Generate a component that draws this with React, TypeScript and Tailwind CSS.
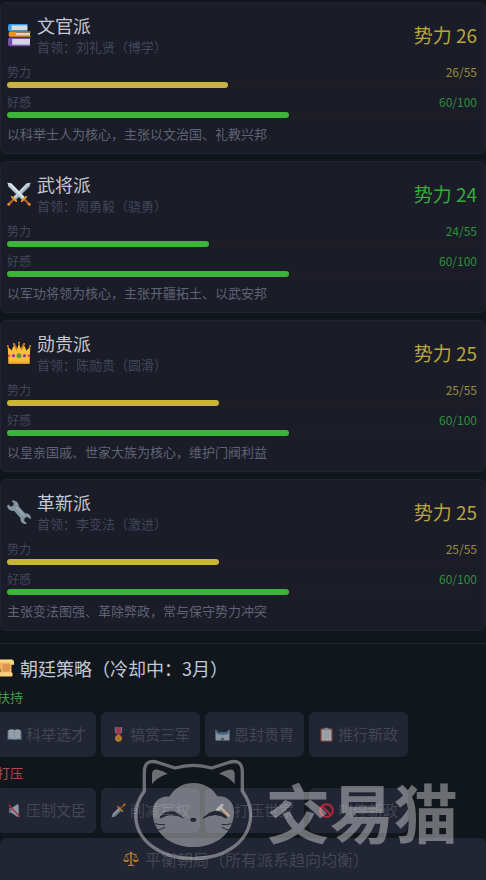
import type { ReactNode } from "react"

type Faction = {
  name: string
  leader: string
  trait: string
  power: number
  favor: number
  desc: string
  icon: ReactNode
  tone: "gold" | "green"
}

const MAX_POWER = 55
const MAX_FAVOR = 100

const TONES = {
  gold: { title: "text-[#b9a63c]", value: "text-[#9c8b38]", bar: "bg-[#c8b43e]" },
  green: { title: "text-[#38a93c]", value: "text-[#2f8f3a]", bar: "bg-[#3cb43a]" },
}

// ─── Faction icons ────────────────────────────────────────────────────────────

function BooksIcon() {
  return (
    <svg viewBox="0 0 24 24" className="w-6 h-6 shrink-0" aria-hidden="true">
      <path d="M3 1h17.5v1.2H5v5h15.5v1.2H3A2 2 0 0 1 1 6.4V3A2 2 0 0 1 3 1z" fill="#3d9be0" />
      <path d="M4.5 2.2h16v5h-16z" fill="#cfdde6" />
      <path d="M3.2 8.600h20.500v1H9v3.200h14.700v1H3.200a1.500 1.500 0 0 1-1.500-1.500v-2.200a1.500 1.500 0 0 1 1.500-1.500z" fill="#f0921e" />
      <path d="M9 9.700h14v3H9z" fill="#dcd6cc" />
      <path d="M3 14.400h20.300v1.400H6v6h17.300v1.500H3a2 2 0 0 1-2-2v-4.900a2 2 0 0 1 2-2z" fill="#7a4bb0" />
      <path d="M5.200 15.800H23v6H5.200z" fill="#d5d6e4" />
    </svg>
  )
}

function SwordsIcon() {
  return (
    <svg viewBox="0 0 24 24" className="w-6 h-6 shrink-0" aria-hidden="true">
      <path d="M6.500 17.500 2 22M17.500 17.500 22 22" stroke="#b0602e" strokeWidth="2.400" />
      <path d="M23.600.7 22.600 4.600 8.900 18 6.200 15.300 19.600 1.600z" fill="#9fb4bd" />
      <path d="M23.600.7 7.500 16.600 6.200 15.300 19.600 1.600z" fill="#c9d8de" />
      <path d="M.4.7 1.400 4.600 15.100 18l2.700-2.700L4.400 1.600z" fill="#b4c7cf" />
      <path d="M.4.7 16.500 16.600 17.800 15.300 4.400 1.600z" fill="#dbe6ea" />
      <path d="M4.800 14.800 9.200 19.200M19.200 14.800 14.800 19.200" stroke="#f0a02c" strokeWidth="1.800" strokeLinecap="round" />
      <circle cx="1.800" cy="22.200" r="1.500" fill="#e08a36" />
      <circle cx="22.200" cy="22.200" r="1.500" fill="#e08a36" />
    </svg>
  )
}

function CrownIcon() {
  return (
    <svg viewBox="0 0 24 24" className="w-6 h-6 shrink-0" aria-hidden="true">
      <path d="M6 9 7.500 2l3.200 6L12 1.500 13.300 8l3.200-6L18 9z" fill="#c8771f" />
      <path d="M1.500 22.500.7 5.500 4.500 9.500 6.800 4.500 9.500 9.500 12 3l2.500 6.500 2.700-5L19.500 9.500l3.800-4-.8 17z" fill="#fcbf3d" />
      <path d="M1.500 19.800h21v2.900h-21z" fill="#f3ab35" />
      <g fill="#e8962b">
        <circle cx=".9" cy="5" r=".9" />
        <circle cx="6.800" cy="3" r=".9" />
        <circle cx="12" cy="1.800" r="1" />
        <circle cx="17.200" cy="3" r=".9" />
        <circle cx="23.100" cy="5" r=".9" />
      </g>
      <circle cx="12" cy="14.800" r="2.500" fill="#5b9a35" />
      <circle cx="6.500" cy="14.800" r="1.700" fill="#a033c4" />
      <circle cx="17.500" cy="14.800" r="1.700" fill="#a033c4" />
      <circle cx="2.100" cy="14.800" r="1.300" fill="#e0433c" />
      <circle cx="21.900" cy="14.800" r="1.300" fill="#e0433c" />
    </svg>
  )
}

function WrenchIcon() {
  return (
    <svg viewBox="0 0 24 24" className="w-6 h-6 shrink-0" aria-hidden="true">
      <path
        d="M5.500.6c3.600-.2 6.500 2.400 6.300 6l6.200 6.700c3.300-.4 6 2 6 5l-1 .8-3-2.300-2.500 1.500-.3 2.800 2.600 2-.8.9c-3.400.2-6-2.500-5.600-6L7.200 11C3.600 11.600.3 9 .2 5.400l.9-.8 3 2.200 2.300-1.300.3-2.500L4.500 1.300z"
        fill="#82959f"
      />
      <path d="M9.500 7.500l7 7.500" stroke="#9cafb8" strokeWidth="1.200" strokeLinecap="round" />
    </svg>
  )
}

// ─── Strategy icons ───────────────────────────────────────────────────────────

function ScrollIcon() {
  return (
    <svg viewBox="0 0 18 18" className="w-[18px] h-[18px] shrink-0" aria-hidden="true">
      <path d="M2 1h12.500v15.500H4z" fill="#f2b262" />
      <path d="M5.500 5h7.500v7.500H5.500z" fill="#dc9650" />
      <path d="M14 .5a3 3 0 0 1 3 3v2.200h-3.500V1z" fill="#ffd98a" />
      <path d="M1 .5h13.500v3H3z" fill="#ffd98a" />
      <path d="M1.500 13.300h12.800c1.800 0 1.800 4.300 0 4.300H3c-1.600 0-2.500-2.300-1.500-4.300z" fill="#ffd07c" />
    </svg>
  )
}

function OpenBookIcon() {
  return (
    <svg viewBox="0 0 15 15" className="w-[15px] h-[15px]" aria-hidden="true">
      <path d="M.3 4 2 3h11l1.700 1v9H.3z" fill="#3f7896" />
      <path d="M1.300 3.500C3.500 2 6 2 7.500 3.200 9 2 11.500 2 13.700 3.500v8.600c-2-.6-4.700-.6-6.200.4-1.500-1-4.200-1-6.200-.4z" fill="#c6d1d8" />
      <path d="M7.500 3.200v9" stroke="#9aabb5" strokeWidth=".6" />
    </svg>
  )
}

function MedalIcon() {
  return (
    <svg viewBox="0 0 15 15" className="w-[15px] h-[15px]" aria-hidden="true">
      <path d="M3.800 0h7.400v5.500L7.500 8.500 3.800 5.500z" fill="#6c9cc8" />
      <path d="M5.200 0h4.600v6.500L7.500 8.500 5.200 6.500z" fill="#e23b4e" />
      <circle cx="7.500" cy="11.300" r="3.400" fill="#f0a32e" />
      <circle cx="7.500" cy="11.300" r="1.700" fill="#d99228" />
    </svg>
  )
}

function StadiumIcon() {
  return (
    <svg viewBox="0 0 15 15" className="w-[15px] h-[15px]" aria-hidden="true">
      <path d="M.5 2.500 4 5.500h7l3.500-3v11H.5z" fill="#b5c4cd" />
      <path d="M.5 2.500 4 5.500h7l3.500-3v2.500L11.500 7.500h-8L.5 5z" fill="#3f80a8" />
      <path d="M5.500 13.500c0-4 4-4 4 0z" fill="#5b7585" />
    </svg>
  )
}

function ClipboardIcon() {
  return (
    <svg viewBox="0 0 15 15" className="w-[15px] h-[15px]" aria-hidden="true">
      <rect x="1.500" y="1.500" width="12" height="13" rx="1" fill="#b4664a" />
      <path d="M2.800 3h9.400v10.500H2.800z" fill="#d7dde2" />
      <path d="M4.500 3.500V1.500h1.700a1.400 1.400 0 0 1 2.600 0h1.700v2z" fill="#a7b4bc" />
      <path d="M4.500 6h6M4.500 8.200h6M4.500 10.400h6" stroke="#b4bfc8" strokeWidth=".8" />
    </svg>
  )
}

function MutedIcon() {
  return (
    <svg viewBox="0 0 15 15" className="w-[15px] h-[15px]" aria-hidden="true">
      <path d="M2 5h3v5H2z" fill="#7a8a94" />
      <path d="M4.500 5.200 11 .8v13.400L4.500 9.800z" fill="#bccbd3" />
      <path d="M11 .8c1.600 2 1.600 11.400 0 13.400z" fill="#82939d" />
      <path d="M2 2.200 12.500 13.500" stroke="#e0334a" strokeWidth="1.300" strokeLinecap="round" />
    </svg>
  )
}

function DaggerIcon() {
  return (
    <svg viewBox="0 0 15 15" className="w-[15px] h-[15px]" aria-hidden="true">
      <path d="M.5 14.500 2 10.500l6-6 2.600 2.600-6 6z" fill="#bccbd4" />
      <path d="M.5 14.500 9.300 5.800l1.300 1.300-6 6z" fill="#8b9fab" />
      <path d="M6.800 3.500l4.700 4.700" stroke="#f09a26" strokeWidth="1.500" strokeLinecap="round" />
      <path d="M9.800 5.200l3.400-3.400" stroke="#b5622c" strokeWidth="1.800" />
      <circle cx="13.500" cy="1.700" r="1.100" fill="#f09a26" />
    </svg>
  )
}

function HammerIcon() {
  return (
    <svg viewBox="0 0 15 15" className="w-[15px] h-[15px]" aria-hidden="true">
      <path d="M5.500 4.500l8.300 8.300" stroke="#f0a23a" strokeWidth="2.200" strokeLinecap="round" />
      <path d="M.8 6.300 6.800.6l2.300 1.500-2 1.300.4 1.200L4 8l-1.200-.5-.8.7z" fill="#a9b7c0" />
    </svg>
  )
}

function ForbiddenIcon() {
  return (
    <svg viewBox="0 0 15 15" className="w-[15px] h-[15px]" aria-hidden="true">
      <circle cx="7.500" cy="7.500" r="6.300" fill="none" stroke="#f0283c" strokeWidth="2" />
      <path d="M3.200 3.200l8.600 8.600" stroke="#f0283c" strokeWidth="2" />
    </svg>
  )
}

function ScalesIcon() {
  return (
    <svg viewBox="0 0 16 16" className="w-4 h-4" aria-hidden="true">
      <g fill="none" stroke="#f5a524" strokeWidth="1.100">
        <path d="M8 1.500v12" strokeWidth="1.500" />
        <path d="M2.500 3.800C5 3.800 6 2.500 8 2.500s3 1.300 5.500 1.300" />
        <path d="M3.200 4 .8 9.200M3.200 4l2.400 5.200M12.800 4l-2.400 5.200M12.800 4l2.400 5.200" strokeWidth=".7" />
      </g>
      <path d="M.3 9h5.800c-.4 2.700-5.400 2.700-5.800 0zM9.900 9h5.800c-.4 2.700-5.400 2.700-5.800 0zM4.500 15c.3-2 6.700-2 7 0z" fill="#f5a524" />
      <circle cx="8" cy="1.500" r="1" fill="#f5a524" />
    </svg>
  )
}

// ─── Data ─────────────────────────────────────────────────────────────────────

const FACTIONS: Faction[] = [
  { name: "文官派", leader: "刘礼贤", trait: "博学", power: 26, favor: 60, desc: "以科举士人为核心，主张以文治国、礼教兴邦", icon: <BooksIcon />, tone: "gold" },
  { name: "武将派", leader: "周勇毅", trait: "骁勇", power: 24, favor: 60, desc: "以军功将领为核心，主张开疆拓土、以武安邦", icon: <SwordsIcon />, tone: "green" },
  { name: "勋贵派", leader: "陈勋贵", trait: "圆滑", power: 25, favor: 60, desc: "以皇亲国戚、世家大族为核心，维护门阀利益", icon: <CrownIcon />, tone: "gold" },
  { name: "革新派", leader: "李变法", trait: "激进", power: 25, favor: 60, desc: "主张变法图强、革除弊政，常与保守势力冲突", icon: <WrenchIcon />, tone: "gold" },
]

const SUPPORT = [
  { label: "科举选才", icon: <OpenBookIcon /> },
  { label: "犒赏三军", icon: <MedalIcon /> },
  { label: "恩封贵胄", icon: <StadiumIcon /> },
  { label: "推行新政", icon: <ClipboardIcon /> },
]

const SUPPRESS = [
  { label: "压制文臣", icon: <MutedIcon /> },
  { label: "削减军权", icon: <DaggerIcon /> },
  { label: "打压世家", icon: <HammerIcon /> },
  { label: "叫停新政", icon: <ForbiddenIcon /> },
]

// ─── Pieces ───────────────────────────────────────────────────────────────────

function Meter({ label, value, max, tone }: { label: string; value: number; max: number; tone: "gold" | "green" }) {
  const percent = Math.floor((value / max) * 100)
  return (
    <div>
      <div className="flex justify-between text-xs leading-4">
        <span className="text-[#43475a]">{label}</span>
        <span className={TONES[tone].value}>{value}/{max}</span>
      </div>
      <div
        role="progressbar"
        aria-label={label}
        aria-valuenow={value}
        aria-valuemax={max}
        className="mt-0.5 h-1.5 rounded-full bg-[#1e1d25]"
      >
        <div className={`h-full rounded-full ${TONES[tone].bar}`} style={{ width: `${percent}%` }} />
      </div>
    </div>
  )
}

function FactionCard({ faction }: { faction: Faction }) {
  const { name, leader, trait, power, favor, desc, icon, tone } = faction
  return (
    <article className="rounded-md border border-[#202432] bg-[#1a1c28] pt-2.5 pb-[9px] pl-1.5 pr-2">
      <div className="flex items-center gap-1.5">
        {icon}
        <div className="flex-1 min-w-0">
          <h2 className="text-lg leading-6 text-[#c3c7d6]">{name}</h2>
          <p className="text-[13px] leading-5 text-[#41465a]">首领：{leader}（{trait}）</p>
        </div>
        <span className={`text-[19px] leading-6 ${TONES[tone].title}`}>势力 {power}</span>
      </div>
      <div className="mt-[7px] flex flex-col gap-1.5">
        <Meter label="势力" value={power} max={MAX_POWER} tone={tone} />
        <Meter label="好感" value={favor} max={MAX_FAVOR} tone="green" />
        <p className="text-[13px] leading-5 text-[#5f6375]">{desc}</p>
      </div>
    </article>
  )
}

function ActionRow({ actions }: { actions: { label: string; icon: ReactNode }[] }) {
  return (
    <div className="mt-[5px] flex flex-wrap gap-[5px]">
      {actions.map((a) => (
        <button
          key={a.label}
          disabled
          className="flex h-[45px] items-center gap-1 rounded-md bg-[#222533] px-2.5 text-[15px] text-[#434653]"
        >
          <span className="opacity-70">{a.icon}</span>
          {a.label}
        </button>
      ))}
    </div>
  )
}

function CatLogo() {
  return (
    <svg viewBox="0 0 375 330" className="w-[125px] h-[110px] shrink-0" aria-hidden="true">
      <path
        d="M43 108V52C43 24 57 16 79 21L135 39C170 29 210 29 245 39L301 21C323 16 337 24 337 52V108C354 132 363 155 362 183C358 262 284 311 190 311C96 311 20 262 17 183C16 155 26 132 43 108Z"
        fill="none"
        stroke="#fff"
        strokeWidth="10"
        strokeLinejoin="round"
      />
      <path d="M66 87V57Q67 40 84 44Q102 48 113 56Q84 65 66 87ZM314 87V57Q313 40 296 44Q278 48 267 56Q296 65 314 87Z" fill="#fff" />
      <mask id="face">
        <path d="M118 125C135 97 162 84 190 84C220 84 247 98 262 124C292 122 312 141 312 170C312 232 260 276 190 276C120 276 68 232 68 170C68 141 90 121 118 125Z" fill="#fff" />
        <path d="M90 186Q122 150 160 189Q122 169 92 189ZM220 189Q258 150 290 186L288 189Q258 169 220 189Z" fill="#000" stroke="#000" strokeWidth="3" />
        <ellipse cx="190" cy="194" rx="9" ry="6" fill="#000" />
        <path d="M75 206Q90 210 105 209M79 226Q92 224 105 217M305 206Q290 210 275 209M301 226Q288 224 275 217" fill="none" stroke="#000" strokeWidth="3" />
      </mask>
      <rect width="375" height="330" fill="#fff" mask="url(#face)" />
    </svg>
  )
}

export default function App() {
  return (
    <main className="relative min-h-screen overflow-hidden bg-[#11161c] pt-0.5 font-['Noto_Sans_CJK_SC','Noto_Sans',sans-serif]">
      <div className="flex flex-col gap-[7px]">
        {FACTIONS.map((f) => (
          <FactionCard key={f.name} faction={f} />
        ))}
      </div>

      <section className="mt-3 border-t border-[#252938]">
        <div className="-ml-[3px]">
          <h2 className="mt-2.5 flex items-center gap-[5px] text-lg leading-7 text-[#c3c7d6]">
            <ScrollIcon />
            朝廷策略（冷却中：3月）
          </h2>
          <h3 className="mt-[5px] text-[13px] leading-5 text-[#439a49]">扶持</h3>
          <ActionRow actions={SUPPORT} />
          <h3 className="mt-1.5 text-[13px] leading-5 text-[#a84c50]">打压</h3>
          <ActionRow actions={SUPPRESS} />
        </div>
        <button
          disabled
          className="mt-[5px] flex h-[42px] w-full items-center justify-center gap-1.5 rounded-t-md bg-[#222533] pl-1.5 text-base text-[#434653]"
        >
          <span className="opacity-70"><ScalesIcon /></span>
          平衡朝局（所有派系趋向均衡）
        </button>
      </section>

      {/* Brand watermark, floats over the action buttons */}
      <div className="pointer-events-none absolute right-7 bottom-[15px] flex items-center gap-[11px] text-white opacity-[0.38]">
        <CatLogo />
        <span className="text-[64px] leading-none font-bold">交易猫</span>
      </div>
    </main>
  )
}
